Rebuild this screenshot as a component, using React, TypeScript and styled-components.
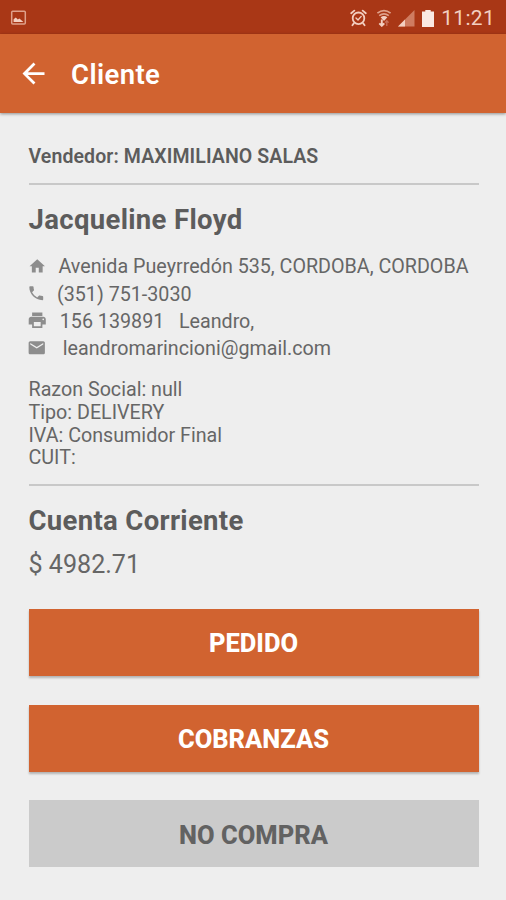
import React from 'react';
import styled, { createGlobalStyle } from 'styled-components';

const GlobalStyle = createGlobalStyle`
  * { box-sizing: border-box; }
  body { margin: 0; background: #eeeeee; font-family: Roboto, "Liberation Sans", sans-serif; color: #666666; }
  h1, h2, p { margin: 0; }
  svg { display: block; flex: none; }
`;

const Screen = styled.div`
  width: 506px;
  height: 900px;
  display: flex;
  flex-direction: column;
  overflow: hidden;
  background: #eeeeee;
`;

const StatusBar = styled.div`
  height: 34px;
  flex: none;
  display: flex;
  align-items: center;
  justify-content: space-between;
  padding: 2px 11px 0 10px;
  background: #a93716;
  color: #f3cfc1;
`;

const StatusIcons = styled.div`
  display: flex;
  align-items: center;
`;

const Clock = styled.span`
  margin-left: 7px;
  font-size: 21px;
  line-height: 30px;
  letter-spacing: 0.3px;
`;

const Gap = styled.span<{ $w: number }>`
  width: ${(p) => p.$w}px;
`;

const AppBar = styled.header`
  height: 78.5px;
  flex: none;
  display: flex;
  align-items: center;
  padding: 1px 0 0 17px;
  background: #d16330;
  color: #fff;
  box-shadow: 0 1px 3px rgba(0, 0, 0, 0.4);
`;

const Title = styled.h1`
  margin: 2px 0 0 21px;
  font-size: 27.5px;
  font-weight: 600;
  line-height: 32px;
  letter-spacing: 0.4px;
`;

const Content = styled.main`
  display: flex;
  flex-direction: column;
  padding: 33px 27.5px 0 28.5px;
`;

const Seller = styled.p`
  font-size: 19.5px;
  font-weight: 600;
  line-height: 22px;
  letter-spacing: 0.1px;
  color: #5c5c5c;
`;

const Rule = styled.hr<{ $top: number }>`
  width: 100%;
  height: 2.5px;
  margin: ${(p) => p.$top}px 0 0;
  border: 0;
  background: #c8c8c8;
`;

const Heading = styled.h2<{ $top: number }>`
  margin-top: ${(p) => p.$top}px;
  font-size: 27.5px;
  font-weight: 700;
  line-height: 32px;
  letter-spacing: 0.33px;
  color: #5c5c5c;
`;

const Contacts = styled.div`
  display: grid;
  grid-auto-rows: 27.3px;
  margin-top: 17.3px;
`;

const ContactRow = styled.div`
  display: flex;
  align-items: center;
`;

const IconCell = styled.span<{ $w: number; $shift: number }>`
  width: ${(p) => p.$w}px;
  flex: none;
  display: flex;
  padding-bottom: 2px;
  color: #8d8d8d;

  svg {
    margin-left: ${(p) => p.$shift}px;
  }
`;

const ContactText = styled.span`
  font-size: 19.7px;
  line-height: 27.3px;
  white-space: pre;
`;

const Details = styled.div`
  margin-top: 17px;
  font-size: 19.7px;
  line-height: 22.6px;
`;

const Balance = styled.p`
  margin-top: 13px;
  font-size: 25.1px;
  line-height: 30px;
`;

const Actions = styled.div`
  display: flex;
  flex-direction: column;
  gap: 28.6px;
  margin-top: 28.9px;
`;

const ActionButton = styled.button<{ $muted?: boolean }>`
  height: 67px;
  padding: 2px 0 0;
  border: 0;
  font-family: inherit;
  font-size: 25.5px;
  font-weight: 800;
  background: ${(p) => (p.$muted ? '#cbcbcb' : '#d16330')};
  color: ${(p) => (p.$muted ? '#626262' : '#fff')};
  box-shadow: ${(p) => (p.$muted ? 'none' : '0 2px 2px rgba(0, 0, 0, 0.25)')};
`;

const Glyph = ({ d, size }: { d: string; size: number }) => (
  <svg width={size} height={size} viewBox="0 0 24 24" fill="currentColor">
    <path d={d} />
  </svg>
);

const HOME = 'M10 20v-6h4v6h5v-8h3L12 3 2 12h3v8z';
const PHONE =
  'M6.62 10.79c1.44 2.83 3.76 5.14 6.59 6.59l2.2-2.2c.27-.27.67-.36 1.02-.24 1.12.37 2.33.57 3.57.57.55 0 1 .45 1 1V20c0 .55-.45 1-1 1-9.39 0-17-7.61-17-17 0-.55.45-1 1-1h3.5c.55 0 1 .45 1 1 0 1.25.2 2.45.57 3.57.11.35.03.74-.25 1.02l-2.2 2.2z';
const PRINT =
  'M19 8H5c-1.66 0-3 1.34-3 3v6h4v4h12v-4h4v-6c0-1.66-1.34-3-3-3zm-3 11H8v-5h8v5zm3-7c-.55 0-1-.45-1-1s.45-1 1-1 1 .45 1 1-.45 1-1 1zm-1-9H6v4h12V3z';
const MAIL =
  'M20 4H4c-1.1 0-1.99.9-1.99 2L2 18c0 1.1.9 2 2 2h16c1.1 0 2-.9 2-2V6c0-1.1-.9-2-2-2zm0 4l-8 5-8-5V6l8 5 8-5v2z';
const BACK = 'M20 11H7.83l5.59-5.59L12 4l-8 8 8 8 1.41-1.41L7.83 13H20v-2z';

const contacts = [
  { icon: HOME, size: 18.5, shift: -0.8, text: 'Avenida Pueyrredón 535, CORDOBA, CORDOBA', start: 30 },
  { icon: PHONE, size: 18.5, shift: -2, text: '(351) 751-3030', start: 28.5 },
  { icon: PRINT, size: 20.5, shift: -1.8, text: '156 139891   Leandro,', start: 31.3 },
  { icon: MAIL, size: 19.5, shift: -1.2, text: 'leandromarincioni@gmail.com', start: 34.3 },
];

const PictureIcon = () => (
  <svg width="17" height="16" viewBox="0 0 17 16" fill="none">
    <rect x="1.7" y="1.2" width="13.6" height="12.8" rx="1" stroke="#dfa18b" strokeWidth="1.5" />
    <path d="M3.6 12V9.2l2.2-1.8 2 2 1.6-1 4 3.6z" fill="#f3cfc1" />
  </svg>
);

const AlarmIcon = () => (
  <svg width="17" height="18" viewBox="0 0 17 18" fill="none" stroke="currentColor" strokeWidth="1.8" strokeLinecap="round">
    <circle cx="8.5" cy="9.3" r="5.8" />
    <path d="M1.2 4.2 4.3 1.6M15.8 4.2l-3.1-2.6M3.8 14.4 2.4 16.2M13.2 14.4l1.4 1.8" />
    <path d="m6 9 2 2 3.2-3.6" strokeWidth="1.4" />
  </svg>
);

const WifiIcon = () => (
  <svg width="16" height="18" viewBox="0 0 16 18" fill="none">
    <path d="M1.4 4.2Q8-1 14.6 4.2" stroke="#dfa18b" strokeWidth="1.7" />
    <path d="M3.2 6.6q4.8-3.4 9.6 0" stroke="#dfa18b" strokeWidth="1.7" />
    <path d="M4.6 8.2Q8 5.6 11.4 8.2L8 12z" fill="currentColor" />
    <path d="M5.8 10.5v6M3.3 14.4l2.5 2.4 2.5-2.4" stroke="currentColor" strokeWidth="1.9" />
    <path d="M10.8 17v-5M9 13.6l1.8-2 1.8 2" stroke="#c9705a" strokeWidth="1.3" />
  </svg>
);

const SignalIcon = () => (
  <svg width="17" height="17" viewBox="0 0 17 17">
    <path d="M16.5 0v16.5H0z" fill="#cf7c61" />
    <path d="M7 9.5v7H0z" fill="#f3cfc1" />
  </svg>
);

const BatteryIcon = () => (
  <svg width="12" height="17" viewBox="0 0 12 17">
    <path d="M3.3 0h5.4v1.5H12V17H0V1.5h3.3z" fill="#fae9e2" />
  </svg>
);

export default function App() {
  return (
    <>
      <GlobalStyle />
      <Screen>
        <StatusBar>
          <PictureIcon />
          <StatusIcons>
            <AlarmIcon />
            <Gap $w={9} />
            <WifiIcon />
            <Gap $w={6} />
            <SignalIcon />
            <Gap $w={7} />
            <BatteryIcon />
            <Clock>11:21</Clock>
          </StatusIcons>
        </StatusBar>
        <AppBar>
          <Glyph d={BACK} size={33} />
          <Title>Cliente</Title>
        </AppBar>
        <Content>
          <Seller>Vendedor: MAXIMILIANO SALAS</Seller>
          <Rule $top={15} />
          <Heading $top={19}>Jacqueline Floyd</Heading>
          <Contacts>
            {contacts.map((c) => (
              <ContactRow key={c.text}>
                <IconCell $w={c.start} $shift={c.shift}>
                  <Glyph d={c.icon} size={c.size} />
                </IconCell>
                <ContactText>{c.text}</ContactText>
              </ContactRow>
            ))}
          </Contacts>
          <Details>
            <p>Razon Social: null</p>
            <p>Tipo: DELIVERY</p>
            <p>IVA: Consumidor Final</p>
            <p>CUIT:</p>
          </Details>
          <Rule $top={13.7} />
          <Heading $top={19}>Cuenta Corriente</Heading>
          <Balance>$ 4982.71</Balance>
          <Actions>
            <ActionButton>PEDIDO</ActionButton>
            <ActionButton>COBRANZAS</ActionButton>
            <ActionButton $muted>NO COMPRA</ActionButton>
          </Actions>
        </Content>
      </Screen>
    </>
  );
}
